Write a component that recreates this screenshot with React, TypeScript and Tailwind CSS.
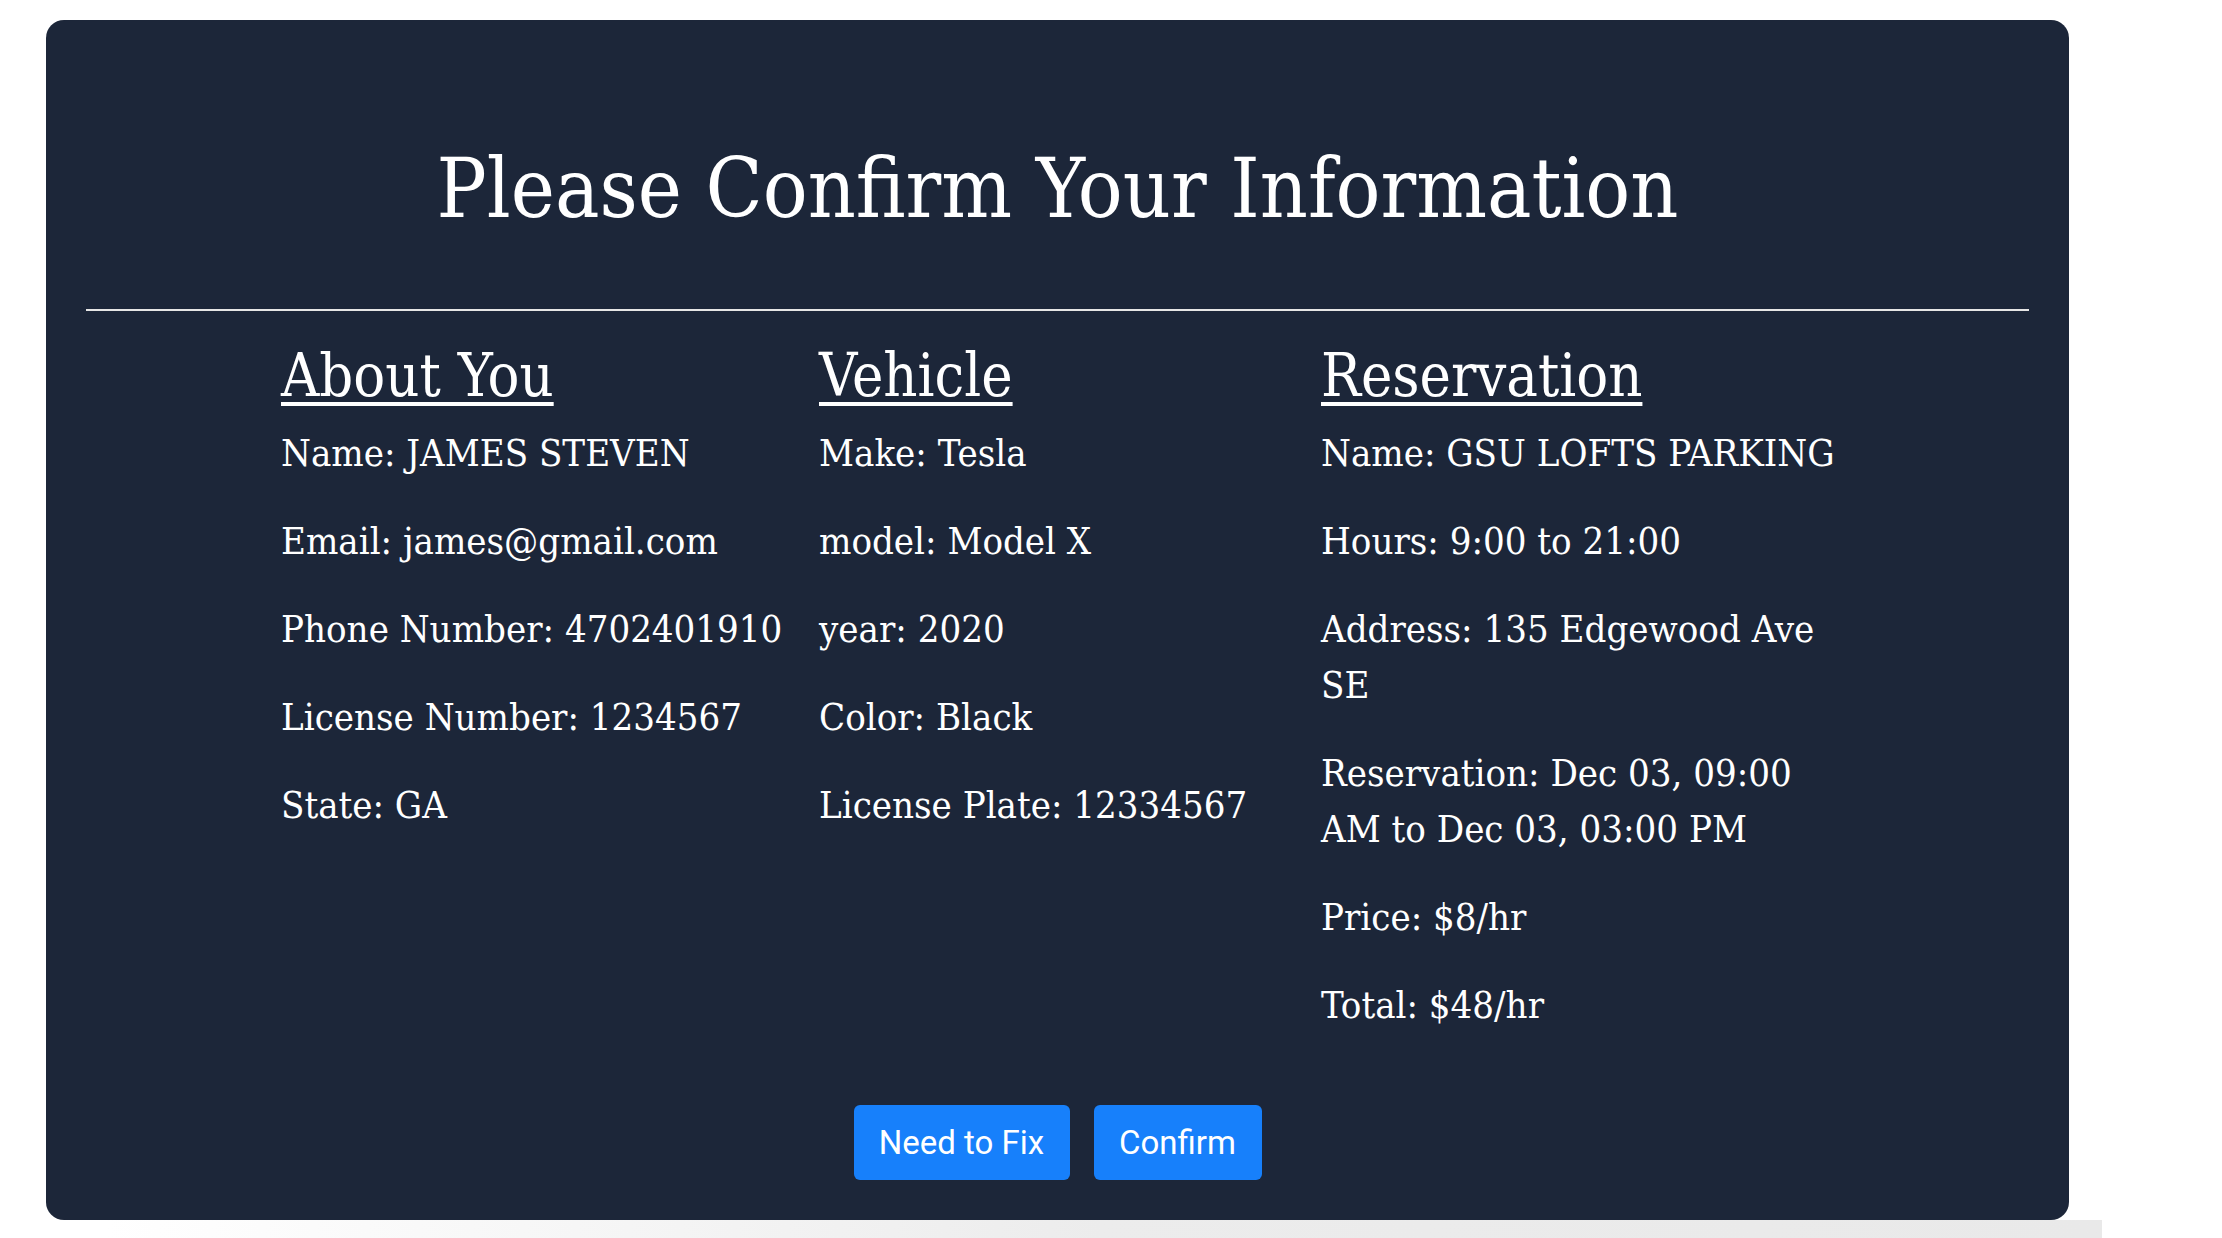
import React from 'react';

const slab = "font-['DejaVu_Serif_Condensed','DejaVu_Serif',serif] font-stretch-condensed";

const aboutYou = [
  'Name: JAMES STEVEN',
  'Email: james@gmail.com',
  'Phone Number: 4702401910',
  'License Number: 1234567',
  'State: GA',
];

const vehicle = [
  'Make: Tesla',
  'model: Model X',
  'year: 2020',
  'Color: Black',
  'License Plate: 12334567',
];

const reservation = [
  ['Name: GSU LOFTS PARKING'],
  ['Hours: 9:00 to 21:00'],
  ['Address: 135 Edgewood Ave', 'SE'],
  ['Reservation: Dec 03, 09:00', 'AM to Dec 03, 03:00 PM'],
  ['Price: $8/hr'],
  ['Total: $48/hr'],
];

const Section = ({ title, items }: { title: string; items: string[][] }) => (
  <div>
    <h2 className="text-[59px] leading-[70px] underline decoration-[4px] underline-offset-[6px]">{title}</h2>
    <div className="mt-[14px]">
      {items.map((lines, i) => (
        <p key={i} className="mb-[32px] text-[38px] leading-[56px] whitespace-nowrap">
          {lines.map((l, j) => (
            <React.Fragment key={j}>
              {j > 0 && <br />}
              {l}
            </React.Fragment>
          ))}
        </p>
      ))}
    </div>
  </div>
);

const App = () => {
  return (
    <div className="min-h-screen bg-white">
      <div className="pt-[20px] pl-[46px]">
        <div className={`w-[2023px] rounded-[18px] bg-[#1c2639] px-[40px] pt-[121px] pb-[40px] text-white ${slab}`}>
          <h1 className="text-center text-[83px] leading-[96px]">Please Confirm Your Information</h1>
          <div className="mt-[72px] h-[2px] bg-[#e6e6e6]" />
          <div className="mt-[30px] grid grid-cols-[538px_502px_520px] pl-[195px]">
            <Section title="About You" items={aboutYou.map((s) => [s])} />
            <Section title="Vehicle" items={vehicle.map((s) => [s])} />
            <Section title="Reservation" items={reservation} />
          </div>
          <div className="mt-[40px] flex justify-center gap-[24px] font-['Roboto',sans-serif] font-stretch-normal">
            <button className="h-[75px] w-[216px] rounded-[6px] bg-[#1780fb] text-[33px] text-white">
              Need to Fix
            </button>
            <button className="h-[75px] w-[168px] rounded-[6px] bg-[#1780fb] text-[33px] text-white">
              Confirm
            </button>
          </div>
        </div>
        <div className="ml-[60px] mr-[120px] h-[19px] bg-gradient-to-r from-white via-[#ececec] to-[#e9e9e9]" />
      </div>
    </div>
  );
};

export default App;
